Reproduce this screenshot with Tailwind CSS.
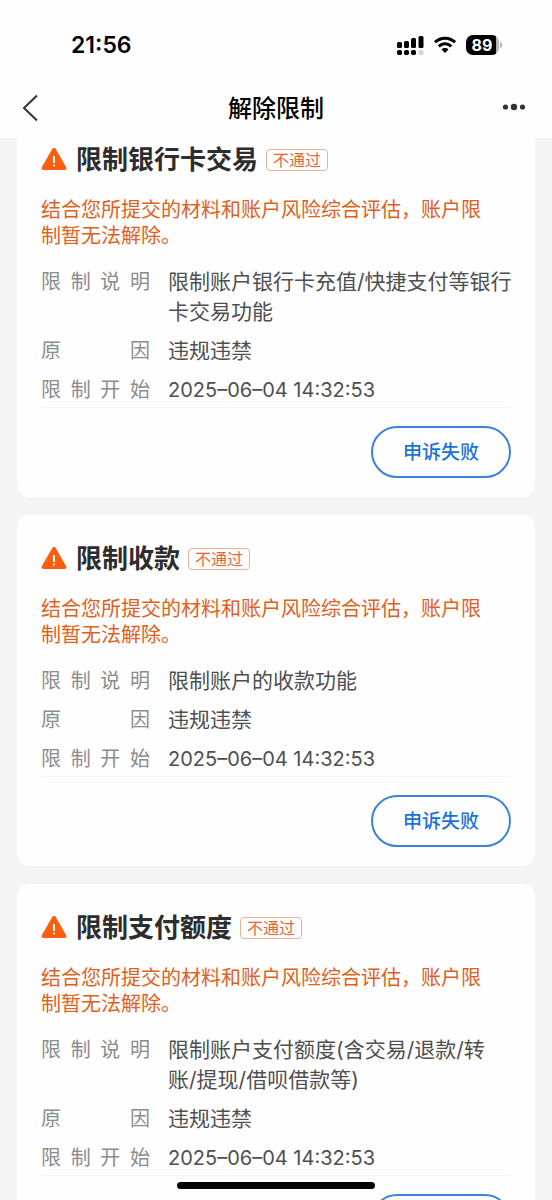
<!DOCTYPE html>
<html lang="zh-CN">
<head>
<meta charset="utf-8">
<meta name="viewport" content="width=device-width, initial-scale=1">
<title>解除限制</title>
<script src="https://cdn.jsdelivr.net/npm/@tailwindcss/browser@4"></script>
</head>
<body class="relative flex h-screen flex-col overflow-hidden bg-[#f4f4f4] font-['Inter','Noto_Sans_CJK_SC',sans-serif]">

<header class="z-10 shrink-0 bg-[#fefefe]">
  <div class="flex h-[76px] items-end justify-between pr-[50px] pl-[71px]">
    <time class="mb-4 text-[23px] leading-[30px] font-semibold text-black">21:56</time>
    <div class="mb-[21px] flex items-center gap-[10px]">
      <svg class="h-5 w-[27px]" viewBox="0 0 27 20" aria-label="信号">
        <g fill="#000">
          <rect x="0" y="7" width="5" height="6" rx="1.500"/>
          <rect x="7" y="6" width="5" height="7" rx="1.500"/>
          <rect x="14" y="3" width="5" height="10" rx="1.500"/>
          <rect x="21.500" y="1" width="5" height="12" rx="1.500"/>
          <rect x="0" y="15" width="5" height="5" rx="1.700"/>
          <rect x="7" y="15" width="5" height="5" rx="1.700"/>
          <rect x="14" y="15" width="5" height="5" rx="1.700"/>
        </g>
        <rect x="21.500" y="15" width="5" height="5" rx="1.700" fill="#d4d4d4"/>
      </svg>
      <svg class="h-[18px] w-[22px]" viewBox="0 0 22 18" fill="none" stroke="#000" stroke-width="3" aria-label="无线网络">
        <path d="M1 6.200C6.800.8 15.200.8 21 6.200"/>
        <path d="M4.700 10.300c3.700-3.500 8.900-3.500 12.600 0"/>
        <path d="M7.500 13.400c2-1.900 5-1.900 7 0L11 17z" fill="#000" stroke="none"/>
      </svg>
      <div class="flex items-center gap-px">
        <div class="flex h-5 w-[33px] items-center justify-center rounded-[7px] bg-linear-to-r from-black from-90% to-[#b5b5b5] to-90% pr-px text-base font-bold text-white">89</div>
        <div class="h-1.5 w-0.5 rounded-r-full bg-[#b5b5b5]"></div>
      </div>
    </div>
  </div>
  <nav class="grid h-[62px] grid-cols-[1fr_auto_1fr] items-center px-[22px] pt-1">
    <button type="button" class="mb-1 justify-self-start" aria-label="返回">
      <svg class="h-[27px] w-4" viewBox="0 0 16 27" fill="none" stroke="#333" stroke-width="2"><path d="M15 1.500L2 14l13 12.500"/></svg>
    </button>
    <h1 class="text-2xl leading-8 font-medium text-black">解除限制</h1>
    <button type="button" class="mr-1 mb-1 justify-self-end" aria-label="更多">
      <svg class="h-2 w-6" viewBox="0 0 24 8" fill="#333"><circle cx="3.500" cy="4" r="2.600"/><circle cx="12" cy="4" r="3.200"/><circle cx="20.500" cy="4" r="2.600"/></svg>
    </button>
  </nav>
</header>

<main class="min-h-0 flex-1 overflow-y-auto px-[17px] [scrollbar-width:none]">
  <div class="-mt-[22px] flex flex-col gap-[18px] pb-10">

    <section class="rounded-xl bg-[#fefefe] px-6 pt-[25px] pb-[19px]">
      <div class="flex h-[38px] items-center">
        <svg class="mr-[9px] h-6 w-[26px] shrink-0" viewBox="0 0 26 24"><path d="M11.200 1q1.800-2.400 3.600 0l10.400 18.200q1 2.600-1.700 2.800h-21Q-.2 21.800.8 19.200z" fill="#fc5e10"/><path d="M13 8v7" stroke="#fff" stroke-width="2"/><circle cx="13" cy="17.500" r="1.100" fill="#fff"/></svg>
        <h2 class="text-[26px] leading-[38px] font-bold text-[#2d2d2d]">限制银行卡交易</h2>
        <span class="ml-2 rounded border border-[#e8b29b] px-1.5 text-base leading-5 text-[#e2683c]">不通过</span>
      </div>
      <p class="mt-[18px] text-[20px] leading-[26px] text-[#e0601c]">结合您所提交的材料和账户风险综合评估，账户限<br>制暂无法解除。</p>
      <dl class="mt-[18px] grid grid-cols-[109px_1fr] gap-x-[18px] gap-y-[9px] border-b border-[#f3f3f3] pb-[2px] text-[21px] leading-[30px] text-[#4f4f4f]">
        <dt class="flex justify-between text-[20px] text-[#8c8c8c]"><span>限</span><span>制</span><span>说</span><span>明</span></dt>
        <dd class="-mr-1">限制账户银行卡充值/快捷支付等银行卡交易功能</dd>
        <dt class="flex justify-between text-[20px] text-[#8c8c8c]"><span>原</span><span>因</span></dt>
        <dd>违规违禁</dd>
        <dt class="flex justify-between text-[20px] text-[#8c8c8c]"><span>限</span><span>制</span><span>开</span><span>始</span></dt>
        <dd class="text-[20px]">2025–06–04 14:32:53</dd>
      </dl>
      <div class="mt-[18px] flex justify-end">
        <button type="button" class="h-[52px] w-[140px] rounded-full border-2 border-[#3b82dc] pt-0.5 text-[19px] font-medium text-[#1a70dc]">申诉失败</button>
      </div>
    </section>

    <section class="rounded-xl bg-[#fefefe] px-6 pt-[25px] pb-[19px]">
      <div class="flex h-[38px] items-center">
        <svg class="mr-[9px] h-6 w-[26px] shrink-0" viewBox="0 0 26 24"><path d="M11.200 1q1.800-2.400 3.600 0l10.400 18.200q1 2.600-1.700 2.800h-21Q-.2 21.800.8 19.200z" fill="#fc5e10"/><path d="M13 8v7" stroke="#fff" stroke-width="2"/><circle cx="13" cy="17.500" r="1.100" fill="#fff"/></svg>
        <h2 class="text-[26px] leading-[38px] font-bold text-[#2d2d2d]">限制收款</h2>
        <span class="ml-2 rounded border border-[#e8b29b] px-1.5 text-base leading-5 text-[#e2683c]">不通过</span>
      </div>
      <p class="mt-[18px] text-[20px] leading-[26px] text-[#e0601c]">结合您所提交的材料和账户风险综合评估，账户限<br>制暂无法解除。</p>
      <dl class="mt-[18px] grid grid-cols-[109px_1fr] gap-x-[18px] gap-y-[9px] border-b border-[#f3f3f3] pb-[2px] text-[21px] leading-[30px] text-[#4f4f4f]">
        <dt class="flex justify-between text-[20px] text-[#8c8c8c]"><span>限</span><span>制</span><span>说</span><span>明</span></dt>
        <dd>限制账户的收款功能</dd>
        <dt class="flex justify-between text-[20px] text-[#8c8c8c]"><span>原</span><span>因</span></dt>
        <dd>违规违禁</dd>
        <dt class="flex justify-between text-[20px] text-[#8c8c8c]"><span>限</span><span>制</span><span>开</span><span>始</span></dt>
        <dd class="text-[20px]">2025–06–04 14:32:53</dd>
      </dl>
      <div class="mt-[18px] flex justify-end">
        <button type="button" class="h-[52px] w-[140px] rounded-full border-2 border-[#3b82dc] pt-0.5 text-[19px] font-medium text-[#1a70dc]">申诉失败</button>
      </div>
    </section>

    <section class="rounded-xl bg-[#fefefe] px-6 pt-[25px] pb-[19px]">
      <div class="flex h-[38px] items-center">
        <svg class="mr-[9px] h-6 w-[26px] shrink-0" viewBox="0 0 26 24"><path d="M11.200 1q1.800-2.400 3.600 0l10.400 18.200q1 2.600-1.700 2.800h-21Q-.2 21.800.8 19.200z" fill="#fc5e10"/><path d="M13 8v7" stroke="#fff" stroke-width="2"/><circle cx="13" cy="17.500" r="1.100" fill="#fff"/></svg>
        <h2 class="text-[26px] leading-[38px] font-bold text-[#2d2d2d]">限制支付额度</h2>
        <span class="ml-2 rounded border border-[#e8b29b] px-1.5 text-base leading-5 text-[#e2683c]">不通过</span>
      </div>
      <p class="mt-[18px] text-[20px] leading-[26px] text-[#e0601c]">结合您所提交的材料和账户风险综合评估，账户限<br>制暂无法解除。</p>
      <dl class="mt-[18px] grid grid-cols-[109px_1fr] gap-x-[18px] gap-y-[9px] border-b border-[#f3f3f3] pb-[2px] text-[21px] leading-[30px] text-[#4f4f4f]">
        <dt class="flex justify-between text-[20px] text-[#8c8c8c]"><span>限</span><span>制</span><span>说</span><span>明</span></dt>
        <dd>限制账户支付额度(含交易/退款/转账/提现/借呗借款等)</dd>
        <dt class="flex justify-between text-[20px] text-[#8c8c8c]"><span>原</span><span>因</span></dt>
        <dd>违规违禁</dd>
        <dt class="flex justify-between text-[20px] text-[#8c8c8c]"><span>限</span><span>制</span><span>开</span><span>始</span></dt>
        <dd class="text-[20px]">2025–06–04 14:32:53</dd>
      </dl>
      <div class="mt-[18px] flex justify-end">
        <button type="button" class="h-[52px] w-[140px] rounded-full border-2 border-[#3b82dc] pt-0.5 text-[19px] font-medium text-[#1a70dc]">申诉失败</button>
      </div>
    </section>

  </div>
</main>

<div class="absolute bottom-[11px] left-1/2 h-[7px] w-[198px] -translate-x-1/2 rounded-full bg-black"></div>
</body>
</html>
